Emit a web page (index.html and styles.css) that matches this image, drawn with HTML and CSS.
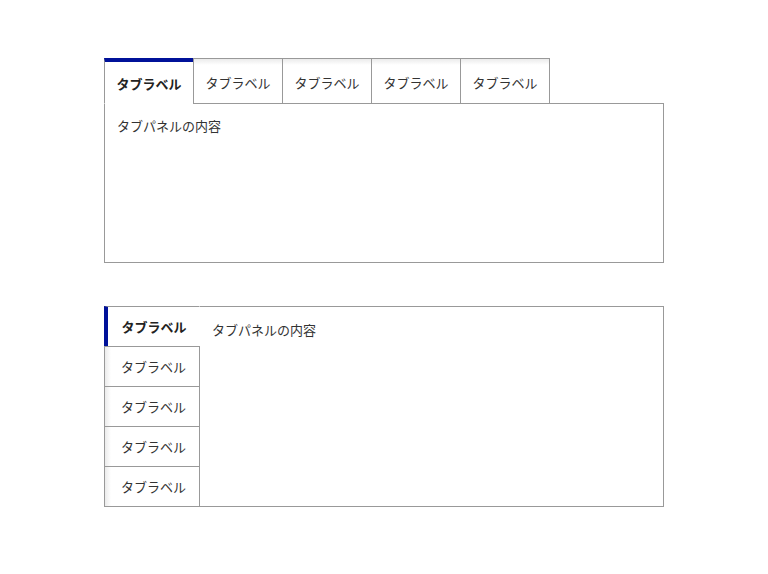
FILE: index.html
```html
<!DOCTYPE html>
<html lang="ja">
<head>
<meta charset="UTF-8">
<meta name="viewport" content="width=device-width, initial-scale=1.0">
<title>タブ</title>
<link rel="stylesheet" href="styles.css">
</head>
<body>
    <div class="page">
        <div class="tabs">
            <div class="tab-list">
                <button class="tab active">タブラベル</button>
                <button class="tab">タブラベル</button>
                <button class="tab">タブラベル</button>
                <button class="tab">タブラベル</button>
                <button class="tab">タブラベル</button>
            </div>
            <div class="tab-panel">タブパネルの内容</div>
        </div>

        <div class="vtabs">
            <div class="vtab-list">
                <button class="vtab active">タブラベル</button>
                <button class="vtab">タブラベル</button>
                <button class="vtab">タブラベル</button>
                <button class="vtab">タブラベル</button>
                <button class="vtab">タブラベル</button>
            </div>
            <div class="vtab-panel">タブパネルの内容</div>
        </div>
    </div>
</body>
</html>
```

FILE: styles.css
```css
body {
    margin: 0;
    background-color: #fff;
    font-family: "Noto Sans CJK JP", "Noto Sans", sans-serif;
    color: #333;
}

.page {
    width: 560px;
    padding: 58px 104px;
}

button {
    font-family: inherit;
    font-size: 13px;
    color: #333;
    cursor: pointer;
    box-sizing: border-box;
}

.tab-list {
    display: flex;
}

.tab {
    position: relative;
    z-index: 1;
    width: 90px;
    height: 46px;
    margin-left: -1px;
    padding: 2px 0 0;
    border: 1px solid #999;
    background: linear-gradient(#ebebeb, #fff 6px);
}

.tab:first-child {
    margin-left: 0;
}

.tab.active {
    border-top: 4px solid #001199;
    border-bottom-color: #fff;
    background: #fff;
    font-weight: bold;
    color: #222;
    padding-top: 1px;
}

.tab-panel {
    height: 160px;
    margin-top: -1px;
    padding: 12px 12px;
    box-sizing: border-box;
    border: 1px solid #999;
    font-size: 13px;
    line-height: 20px;
}

.vtabs {
    display: flex;
    margin-top: 43px;
    height: 201px;
    border: 1px solid #999;
    box-sizing: border-box;
}

.vtab-list {
    display: flex;
    flex-direction: column;
    margin: -1px 0 0 -1px;
}

.vtab {
    width: 96px;
    height: 40px;
    padding: 0 0 0 3px;
    border: 1px solid #999;
    border-bottom: none;
    background: linear-gradient(90deg, #ebebeb, #fff 6px);
}

.vtab.active {
    border-left: 4px solid #001199;
    border-right-color: #fff;
    background: #fff;
    font-weight: bold;
    color: #222;
    padding: 0 0 0 1px;
}

.vtab-panel {
    flex: 1;
    padding: 13px 12px;
    font-size: 13px;
    line-height: 20px;
}
```
